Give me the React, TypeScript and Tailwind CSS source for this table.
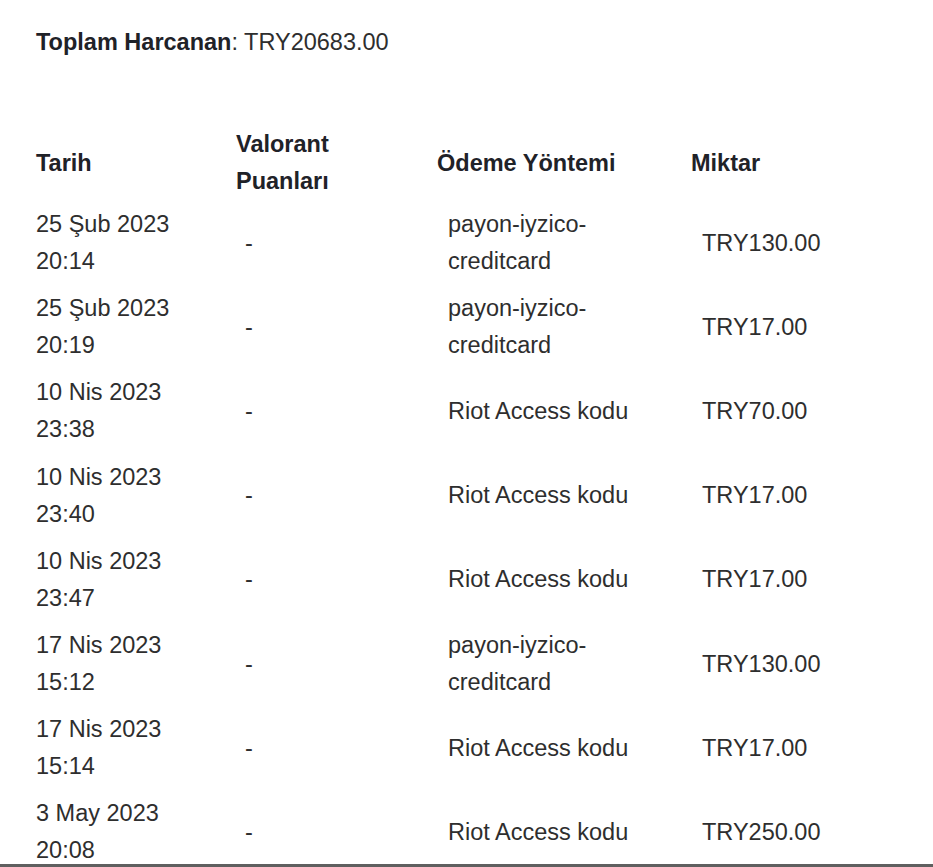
import React from 'react';

type Row = { date: string; time: string; points: string; method: string; amount: string };

const rows: Row[] = [
  { date: '25 Şub 2023', time: '20:14', points: '-', method: 'payon-iyzico-creditcard', amount: 'TRY130.00' },
  { date: '25 Şub 2023', time: '20:19', points: '-', method: 'payon-iyzico-creditcard', amount: 'TRY17.00' },
  { date: '10 Nis 2023', time: '23:38', points: '-', method: 'Riot Access kodu', amount: 'TRY70.00' },
  { date: '10 Nis 2023', time: '23:40', points: '-', method: 'Riot Access kodu', amount: 'TRY17.00' },
  { date: '10 Nis 2023', time: '23:47', points: '-', method: 'Riot Access kodu', amount: 'TRY17.00' },
  { date: '17 Nis 2023', time: '15:12', points: '-', method: 'payon-iyzico-creditcard', amount: 'TRY130.00' },
  { date: '17 Nis 2023', time: '15:14', points: '-', method: 'Riot Access kodu', amount: 'TRY17.00' },
  { date: '3 May 2023', time: '20:08', points: '-', method: 'Riot Access kodu', amount: 'TRY250.00' },
];

const cols = 'grid grid-cols-[200px_201px_254px_1fr]';

export default function App() {
  return (
    <div
      className="h-[867px] w-[933px] overflow-hidden bg-white border-b-[3px] border-[#5f5f5f] text-[#2e2e2e] text-[23.5px] leading-[37px]"
      style={{ fontFamily: '"Liberation Sans", Arial, sans-serif' }}
    >
      <div className="pl-[36px] pt-[24px]">
        {/* Total */}
        <p>
          <span className="font-bold text-[#1f2228]">Toplam Harcanan</span>: TRY20683.00
        </p>

        {/* Table */}
        <div className="mt-[65px]">
          <div className={`${cols} items-center font-bold text-[#1f2228] pb-[1px]`}>
            <div>Tarih</div>
            <div>Valorant<br />Puanları</div>
            <div>Ödeme Yöntemi</div>
            <div>Miktar</div>
          </div>

          {rows.map((r, i) => (
            <div key={i} className={`${cols} items-center h-[84.2px]`}>
              <div>{r.date}<br />{r.time}</div>
              <div className="pl-[9px]">{r.points}</div>
              <div className="pl-[11px] pr-[40px]">
                {r.method === 'payon-iyzico-creditcard' ? <>payon-iyzico-<br />creditcard</> : r.method}
              </div>
              <div className="pl-[11px]">{r.amount}</div>
            </div>
          ))}
        </div>
      </div>
    </div>
  );
}
